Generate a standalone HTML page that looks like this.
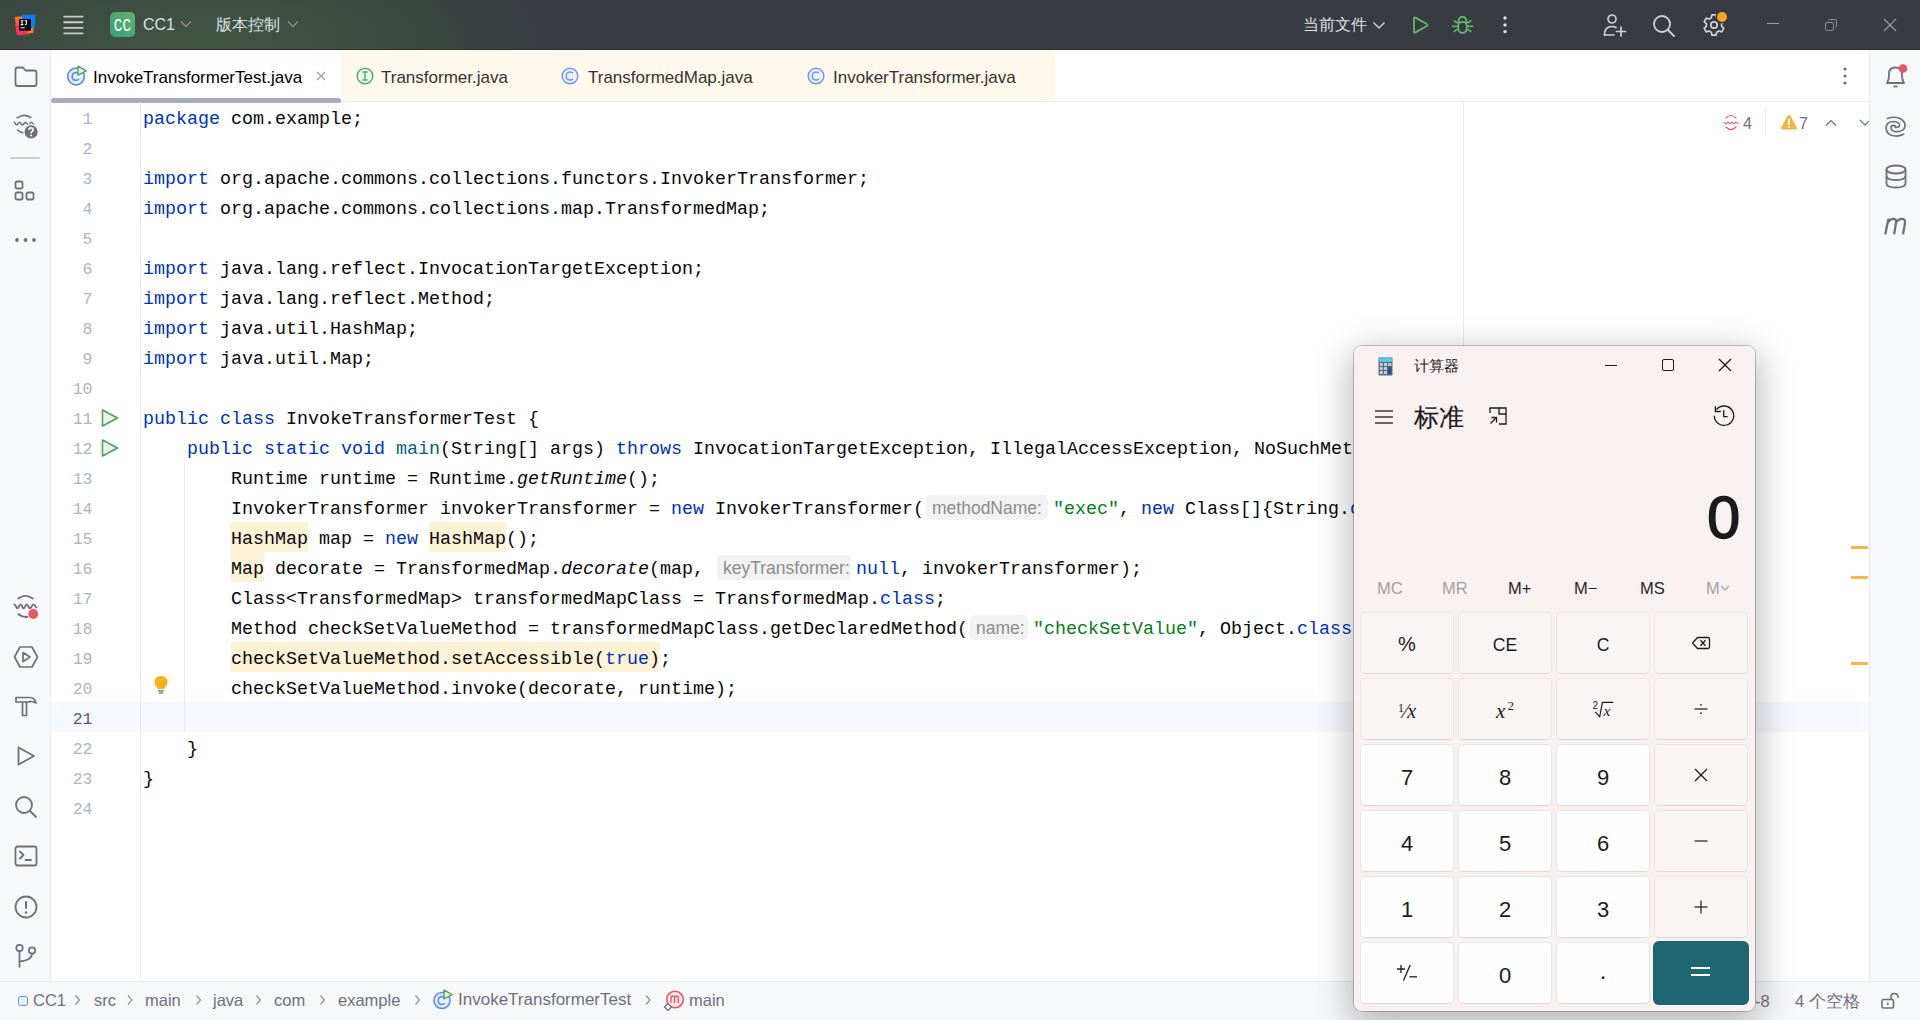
<!DOCTYPE html>
<html><head><meta charset="utf-8">
<style>
*{margin:0;padding:0;box-sizing:border-box}
html,body{width:1920px;height:1020px;overflow:hidden;background:#fff;font-family:"Liberation Sans",sans-serif}
.abs,svg.ic{position:absolute}
#title{left:0;top:0;width:1920px;height:50px;background:radial-gradient(ellipse 400px 130px at 200px 40px,#415544 0%,#3e4f42 30%,#3b4541 62%,#393c42 88%,#393b43 100%),#393b43;border-bottom:1px solid #2c2e33}
.tt{position:absolute;color:#dfe1e5;font-size:16px;line-height:20px;white-space:nowrap}
#lstrip{left:0;top:50px;width:51px;height:931px;background:#f7f8fa;border-right:1px solid #ebecf0}
#rstrip{left:1869px;top:50px;width:51px;height:931px;background:#f7f8fa;border-left:1px solid #ebecf0}
#tabs{left:51px;top:50px;width:1818px;height:52px;background:#fff;border-bottom:1px solid #ebecf0}
#status{left:0;top:981px;width:1920px;height:39px;background:#f7f8fa;border-top:1px solid #ebecf0}
.tab{position:absolute;top:68px;font-size:17px;line-height:20px;color:#000;white-space:nowrap}
.bc{position:absolute;top:990px;font-size:16.5px;line-height:20px;color:#6c707e;white-space:nowrap}
.ln{position:absolute;left:51.5px;width:41px;text-align:right;font-family:"Liberation Mono",monospace;font-size:16.5px;color:#aeb3c2;height:30px;line-height:33px}
.cl{position:absolute;left:143px;height:30px;line-height:33px;font-family:"Liberation Mono",monospace;font-size:18.33px;color:#080808;white-space:pre}
.k{color:#0033b3}
.s{color:#067d17}
.m{color:#00627a}
.i{font-style:italic}
.hl{}
.inlay{position:absolute;height:25px;line-height:26px;background:#f2f2f2;border-radius:5px;color:#8c8c8c;font-size:17.5px;padding:0 0 0 6px;white-space:nowrap}
</style></head>
<body>
<!-- ===== TITLE BAR ===== -->
<div id="title" class="abs"></div>
<!-- IJ logo -->
<svg class="ic" style="left:14px;top:14px" width="22" height="22" viewBox="0 0 22 22">
 <defs><linearGradient id="ijo" x1="0" y1="0" x2="0" y2="1"><stop offset="0" stop-color="#fc801d"/><stop offset="1" stop-color="#fe2857"/></linearGradient></defs>
 <path d="M0.8 3 L9 2.2 L9.5 14 L2.5 20 Z" fill="url(#ijo)"/>
 <path d="M8 2 Q8 0.8 9.2 0.8 L20 0.8 Q21.4 0.8 21.3 2.2 L21 13.5 L15 15 L8 9 Z" fill="#087cfa"/>
 <path d="M1.5 10 L11 15 L17 19 L14 20 L3.3 21.4 Z" fill="#fe315d"/>
 <path d="M15.5 15 L19.5 13.3 L19.3 18.8 L13.2 19.4 Z" fill="#fc801d"/>
 <rect x="5" y="5" width="12" height="11.6" fill="#000"/>
 <g stroke="#fff" stroke-width="1.1" fill="none"><path d="M6.6 6.8 H9.4 M8 6.8 V10.6 M6.6 10.6 H9.4"/><path d="M10.6 6.8 H13.2 M12.4 6.8 V9.6 Q12.4 10.7 10.9 10.7"/></g>
 <rect x="6.6" y="13.3" width="4.2" height="1" fill="#fff"/>
</svg>
<!-- hamburger -->
<svg class="ic" style="left:63px;top:14px" width="22" height="22" viewBox="0 0 22 22">
 <g stroke="#c9cbcf" stroke-width="1.9" stroke-linecap="round"><path d="M1.2 2.6 H19.6"/><path d="M1.2 8.2 H19.6"/><path d="M1.2 13.9 H19.6"/><path d="M1.2 19.4 H19.6"/></g>
</svg>
<!-- project badge -->
<div class="abs" style="left:110px;top:12px;width:25px;height:25px;border-radius:5px;background:linear-gradient(45deg,#3a9a7e,#62b46a)"></div>
<div class="tt" style="left:108px;top:16px;width:29px;text-align:center;font-family:'Liberation Mono',monospace;font-size:18px;color:#fff;transform:scaleX(0.8)">CC</div>
<div class="tt" style="left:143px;top:15px;font-size:16px">CC1</div>
<svg class="ic" style="left:180px;top:20px" width="12" height="8" viewBox="0 0 12 8"><path d="M1 1.5 L6 6.5 L11 1.5" fill="none" stroke="#8e9196" stroke-width="1.3"/></svg>
<div class="tt" style="left:216px;top:15px">版本控制</div>
<svg class="ic" style="left:287px;top:20px" width="12" height="8" viewBox="0 0 12 8"><path d="M1 1.5 L6 6.5 L11 1.5" fill="none" stroke="#8e9196" stroke-width="1.3"/></svg>

<div class="tt" style="left:1303px;top:15px">当前文件</div>
<svg class="ic" style="left:1372px;top:21px" width="14" height="9" viewBox="0 0 14 9"><path d="M1.5 1.5 L7 7 L12.5 1.5" fill="none" stroke="#c9cbcf" stroke-width="1.5"/></svg>
<!-- run -->
<svg class="ic" style="left:1410px;top:14px" width="22" height="22" viewBox="0 0 22 22"><path d="M4 4.5 Q4 2.8 5.5 3.6 L16.8 10 Q18 11 16.8 12 L5.5 18.4 Q4 19.2 4 17.5 Z" fill="none" stroke="#5fb865" stroke-width="1.8" stroke-linejoin="round"/></svg>
<!-- debug bug -->
<svg class="ic" style="left:1451px;top:14px" width="23" height="22" viewBox="0 0 23 22"><g fill="none" stroke="#5fb865" stroke-width="1.7" stroke-linecap="round">
 <path d="M7.6 7.6 Q7.6 2.9 11.5 2.9 Q15.4 2.9 15.4 7.6"/>
 <path d="M7.3 12 Q7.3 7.8 11.5 7.8 Q15.7 7.8 15.7 12 V14 Q15.7 18.9 11.5 18.9 Q7.3 18.9 7.3 14 Z"/>
 <path d="M3.2 6.8 Q5 8.5 7.2 8.7"/><path d="M19.8 6.8 Q18 8.5 15.8 8.7"/><path d="M1.5 12.3 H7"/><path d="M21.5 12.3 H16"/><path d="M3.2 17.3 Q5 15.6 7.4 15.4"/><path d="M19.8 17.3 Q18 15.6 15.6 15.4"/></g></svg>
<!-- kebab -->
<svg class="ic" style="left:1500px;top:14px" width="10" height="22" viewBox="0 0 10 22"><g fill="#dfe1e5"><circle cx="5" cy="4" r="1.7"/><circle cx="5" cy="11" r="1.7"/><circle cx="5" cy="17.6" r="1.7"/></g></svg>
<!-- person+ -->
<svg class="ic" style="left:1603px;top:13px" width="24" height="24" viewBox="0 0 24 24"><g fill="none" stroke="#cfd1d5" stroke-width="1.7" stroke-linecap="round">
 <circle cx="9" cy="6" r="4"/><path d="M1.5 22 Q1.5 13.5 9 13.5 Q11.5 13.5 13 14.5"/><path d="M1.5 22 H11"/><path d="M18 14 V23"/><path d="M13.5 18.5 H22.5"/></g></svg>
<!-- search -->
<svg class="ic" style="left:1652px;top:14px" width="24" height="24" viewBox="0 0 24 24"><g fill="none" stroke="#cfd1d5" stroke-width="1.8" stroke-linecap="round"><circle cx="10" cy="10" r="8"/><path d="M16 16 L22 22"/></g></svg>
<!-- gear -->
<svg class="ic" style="left:1702px;top:13px" width="24" height="24" viewBox="0 0 24 24"><g fill="none" stroke="#cfd1d5" stroke-width="1.7" stroke-linejoin="round">
 <path d="M10 1.8 H14 L14.7 4.8 L16.8 6 L19.8 5.1 L21.8 8.6 L19.6 10.8 V13.2 L21.8 15.4 L19.8 18.9 L16.8 18 L14.7 19.2 L14 22.2 H10 L9.3 19.2 L7.2 18 L4.2 18.9 L2.2 15.4 L4.4 13.2 V10.8 L2.2 8.6 L4.2 5.1 L7.2 6 L9.3 4.8 Z"/><circle cx="12" cy="12" r="3.2"/></g></svg>
<div class="abs" style="left:1717px;top:12px;width:10px;height:10px;border-radius:5px;background:#f5a623;box-shadow:0 0 0 1.5px #393b43"></div>
<!-- window controls -->
<div class="abs" style="left:1767px;top:23px;width:12px;height:1px;background:#9b9da2"></div>
<svg class="ic" style="left:1824px;top:18px" width="14" height="14" viewBox="0 0 14 14"><g fill="none" stroke="#8f9196" stroke-width="1"><rect x="1.5" y="4.5" width="8" height="8" rx="1.5"/><path d="M4.5 2.5 Q4.5 1.5 5.5 1.5 H11 Q12.5 1.5 12.5 3 V8.5 Q12.5 9.5 11.5 9.5"/></g></svg>
<svg class="ic" style="left:1883px;top:18px" width="14" height="14" viewBox="0 0 14 14"><g stroke="#9b9da2" stroke-width="1.1"><path d="M1 1 L13 13"/><path d="M13 1 L1 13"/></g></svg>

<!-- ===== STRIPS ===== -->
<div id="lstrip" class="abs"></div>
<div id="rstrip" class="abs"></div>
<div id="tabs" class="abs"></div>
<div id="status" class="abs"></div>

<!-- left strip icons -->
<svg class="ic" style="left:14px;top:66px" width="24" height="22" viewBox="0 0 24 22"><path d="M1.5 3.5 Q1.5 1.5 3.5 1.5 H9 L11.5 4.5 H20.5 Q22.5 4.5 22.5 6.5 V18 Q22.5 20 20.5 20 H3.5 Q1.5 20 1.5 18 Z" fill="none" stroke="#6c707e" stroke-width="1.8" stroke-linejoin="round"/></svg>
<svg class="ic" style="left:13px;top:113px" width="28" height="28" viewBox="0 0 28 28"><g fill="none" stroke="#6c707e" stroke-width="1.6" stroke-linecap="round">
 <path d="M4.2 4.8 Q11 0.1 17.7 4.5"/><path d="M1.2 9.3 C2.1 9.3 2.7 12 3.6 12 C4.6 12 5.5 9.3 6.5 9.3 C7.5 9.3 8.5 12 9.5 12 C10.5 12 11.5 9.3 12.5 9.3 C13.5 9.3 14.4 12 15.4 12 C16.4 12 17.3 9.3 18.3 9.3 C19.2 9.3 19.9 10.5 20.5 11.5"/><path d="M4.4 17 Q7 19.6 11 19.7"/></g>
 <circle cx="18.1" cy="18.9" r="7.2" fill="#6c707e" stroke="#f7f8fa" stroke-width="1.2"/><path d="M16 16.9 Q16 14.9 18.1 14.9 Q20.2 14.9 20.2 16.8 Q20.2 18 18.9 18.6 Q18.1 19 18.1 20.4" fill="none" stroke="#fff" stroke-width="1.6"/><circle cx="18.1" cy="22.5" r="1" fill="#fff"/></svg>
<div class="abs" style="left:10px;top:157px;width:30px;height:2px;background:#c9ccd6;border-radius:1px"></div>
<svg class="ic" style="left:14px;top:180px" width="22" height="22" viewBox="0 0 22 22"><g fill="none" stroke="#6c707e" stroke-width="1.8"><rect x="1.5" y="1.5" width="7" height="7" rx="1.6"/><rect x="1.5" y="12.5" width="7" height="7" rx="1.6"/><rect x="12.5" y="12.5" width="7" height="7" rx="1.6"/></g></svg>
<svg class="ic" style="left:14px;top:236px" width="24" height="8" viewBox="0 0 24 8"><g fill="#6c707e"><circle cx="3" cy="4" r="1.9"/><circle cx="11.5" cy="4" r="1.9"/><circle cx="20" cy="4" r="1.9"/></g></svg>

<svg class="ic" style="left:13px;top:593px" width="28" height="28" viewBox="0 0 28 28"><g fill="none" stroke="#6c707e" stroke-width="1.9" stroke-linecap="round">
 <path d="M5.2 5.5 Q12.45 0.2 19.7 5.5"/><path d="M1.4 11.4 C2.5 11.4 3.3 15.4 4.4 15.4 C5.5 15.4 6.4 11.4 7.5 11.4 C8.6 11.4 9.5 15.4 10.6 15.4 C11.7 15.4 12.7 11.4 13.8 11.4 C14.9 11.4 15.8 15.4 16.9 15.4 C18 15.4 19.3 11.4 20.5 11.4 C21.5 11.4 22.4 13.3 23.2 14.4"/><path d="M5.4 21.2 Q9.5 24.5 14.4 24"/></g>
 <circle cx="20.25" cy="21" r="4.9" fill="#e55765"/></svg>
<svg class="ic" style="left:13px;top:645px" width="26" height="24" viewBox="0 0 26 24"><g fill="none" stroke="#6c707e" stroke-width="1.7" stroke-linejoin="round"><path d="M7 2 H19 L24.5 12 L19 22 H7 L1.5 12 Z"/><path d="M10 7.5 L17 12 L10 16.5 Z"/></g></svg>
<svg class="ic" style="left:14px;top:694px" width="24" height="24" viewBox="0 0 24 24"><g fill="none" stroke="#6c707e" stroke-width="1.7" stroke-linejoin="round"><path d="M2 3.5 H15.5 Q21 3.5 22 9 Q18.5 7 15.5 7.5 V8 H2 Z"/><path d="M8.5 8 V21.5 H12.5 V8"/></g></svg>
<svg class="ic" style="left:15px;top:745px" width="22" height="22" viewBox="0 0 22 22"><path d="M3.5 2.5 L19 11 L3.5 19.5 Z" fill="none" stroke="#6c707e" stroke-width="1.8" stroke-linejoin="round"/></svg>
<svg class="ic" style="left:14px;top:795px" width="24" height="24" viewBox="0 0 24 24"><g fill="none" stroke="#6c707e" stroke-width="1.8" stroke-linecap="round"><circle cx="10" cy="10" r="8"/><path d="M16 16 L22 22"/></g></svg>
<svg class="ic" style="left:14px;top:845px" width="24" height="22" viewBox="0 0 24 22"><g fill="none" stroke="#6c707e" stroke-width="1.8" stroke-linejoin="round" stroke-linecap="round"><rect x="1.5" y="1.5" width="21" height="19" rx="2"/><path d="M6 6.5 L9.5 10 L6 13.5"/><path d="M11.5 15 H17"/></g></svg>
<svg class="ic" style="left:13px;top:894px" width="26" height="26" viewBox="0 0 26 26"><g fill="none" stroke="#6c707e" stroke-width="1.8"><circle cx="13" cy="13" r="10.5"/></g><rect x="12" y="7" width="2" height="8" rx="1" fill="#6c707e"/><circle cx="13" cy="18.5" r="1.3" fill="#6c707e"/></svg>
<svg class="ic" style="left:14px;top:943px" width="24" height="26" viewBox="0 0 24 26"><g fill="none" stroke="#6c707e" stroke-width="1.7" stroke-linecap="round"><circle cx="5.5" cy="5" r="3.2"/><circle cx="18" cy="7.5" r="3.2"/><path d="M5.5 8.2 V24"/><path d="M18 10.7 Q18 17 5.5 18.5"/></g></svg>

<!-- right strip icons -->
<svg class="ic" style="left:1883px;top:63px" width="26" height="28" viewBox="0 0 26 28"><g fill="none" stroke="#6c707e" stroke-width="1.8" stroke-linejoin="round"><path d="M4 20 Q6 17 6 13 V11 Q6 4.5 12.5 4.5 Q19 4.5 19 11 V13 Q19 17 21 20 Z"/><path d="M10.5 23.5 H14.5"/></g><circle cx="20" cy="5.5" r="4.3" fill="#e55765"/></svg>
<svg class="ic" style="left:1876px;top:106px" width="40" height="40" viewBox="0 0 40 40"><g fill="none" stroke="#6c707e" stroke-width="1.7" stroke-linecap="round"><path d="M11.4 12.5 Q18 10 24 12.5 Q29.5 15.5 29 20 Q28.5 25 21.5 25.7 Q15.5 26 15 22 Q15 19.3 17.5 19.3 Q19.5 19.5 19.5 21.3"/><path d="M27.6 28.2 Q23 30.3 19 30 Q10.5 29.5 10 22 Q10.5 15.5 17.5 15.5 Q23.5 15.8 23.5 19.5 Q23.5 21.5 19.5 21.3"/></g></svg>
<svg class="ic" style="left:1884px;top:164px" width="24" height="25" viewBox="0 0 24 25"><g fill="none" stroke="#6c707e" stroke-width="1.8"><ellipse cx="12" cy="5.5" rx="9.5" ry="4"/><path d="M2.5 5.5 V19.5 Q2.5 23.5 12 23.5 Q21.5 23.5 21.5 19.5 V5.5"/><path d="M2.5 12 Q2.5 16 12 16 Q21.5 16 21.5 12"/></g></svg>
<svg class="ic" style="left:1880px;top:214px" width="30" height="24" viewBox="0 0 30 24"><path d="M5.4 19.4 L8.3 5.6 M7.9 8.6 Q9.8 4.9 13.3 4.9 Q16.6 4.9 16 8.6 L14.3 19.4 M16.1 8.4 Q18.3 4.9 21.8 4.9 Q25.6 4.9 25 8.8 L23.2 19.4" fill="none" stroke="#6c707e" stroke-width="2.3" stroke-linecap="round"/></svg>

<!-- tabs -->
<div class="abs" style="left:341px;top:50px;width:714px;height:51px;background:#fff8ec"></div>
<svg class="ic" style="left:66px;top:65px" width="22" height="22" viewBox="0 0 22 22"><circle cx="10" cy="11.5" r="8.3" fill="#e7effd" stroke="#5e8ef7" stroke-width="1.7"/><path d="M13 8.8 Q11.8 7.6 10 7.6 Q6.2 7.6 6.2 11.5 Q6.2 15.4 10 15.4 Q11.8 15.4 13 14.2" fill="none" stroke="#5e8ef7" stroke-width="1.7"/><path d="M12 1.2 L20.2 5.8 L12 10.2 Z" fill="#e9f5e7" stroke="#4fa05b" stroke-width="1.4" stroke-linejoin="round"/></svg>
<div class="tab" style="left:93px">InvokeTransformerTest.java</div>
<svg class="ic" style="left:316px;top:71px" width="10" height="10" viewBox="0 0 10 10"><g stroke="#9fa2a8" stroke-width="1.2"><path d="M1 1 L9 9"/><path d="M9 1 L1 9"/></g></svg>
<div class="abs" style="left:51px;top:98px;width:290px;height:5px;background:#a8aebc;border-radius:3px"></div>
<svg class="ic" style="left:356px;top:67px" width="18" height="18" viewBox="0 0 18 18"><circle cx="9" cy="9" r="7.8" fill="#eef7ee" stroke="#59a869" stroke-width="1.5"/><path d="M6.5 5 H11.5 M9 5 V13 M6.5 13 H11.5" stroke="#59a869" stroke-width="1.4" fill="none"/></svg>
<div class="tab" style="left:381px;color:#333">Transformer.java</div>
<svg class="ic" style="left:561px;top:67px" width="18" height="18" viewBox="0 0 18 18"><circle cx="9" cy="9" r="7.8" fill="#eef3fe" stroke="#6d98f5" stroke-width="1.5"/><path d="M12 6.3 Q11 5 9.2 5 Q5.2 5 5.2 9 Q5.2 13 9.2 13 Q11 13 12 11.7" fill="none" stroke="#6d98f5" stroke-width="1.4"/></svg>
<div class="tab" style="left:588px;color:#333">TransformedMap.java</div>
<svg class="ic" style="left:807px;top:67px" width="18" height="18" viewBox="0 0 18 18"><circle cx="9" cy="9" r="7.8" fill="#eef3fe" stroke="#6d98f5" stroke-width="1.5"/><path d="M12 6.3 Q11 5 9.2 5 Q5.2 5 5.2 9 Q5.2 13 9.2 13 Q11 13 12 11.7" fill="none" stroke="#6d98f5" stroke-width="1.4"/></svg>
<div class="tab" style="left:833px;color:#333">InvokerTransformer.java</div>
<svg class="ic" style="left:1840px;top:66px" width="10" height="20" viewBox="0 0 10 20"><g fill="#6c707e"><circle cx="5" cy="3" r="1.6"/><circle cx="5" cy="10" r="1.6"/><circle cx="5" cy="17" r="1.6"/></g></svg>

<!-- editor decorations -->
<div class="abs" style="left:51px;top:702px;width:1818px;height:30px;background:#f5f8fe"></div>
<div class="abs" style="left:231px;top:522px;width:77px;height:30px;background:#fcf2d6"></div>
<div class="abs" style="left:429px;top:522px;width:77px;height:30px;background:#fcf2d6"></div>
<div class="abs" style="left:231px;top:552px;width:33px;height:30px;background:#fcf2d6"></div>
<div class="abs" style="left:231px;top:642px;width:429px;height:30px;background:#fcf2d6"></div>
<div class="abs" style="left:140px;top:102px;width:1px;height:878px;background:#ebecf0"></div>
<div class="abs" style="left:1463px;top:102px;width:1px;height:878px;background:#ebecf0"></div>
<div class="abs" style="left:184px;top:462px;width:1px;height:271px;background:#ebecf0"></div>
<svg class="ic" style="left:100px;top:408px" width="20" height="20" viewBox="0 0 20 20"><path d="M2.5 2 L17.5 10 L2.5 18 Z" fill="#eef7ee" stroke="#4da35a" stroke-width="1.6" stroke-linejoin="round"/></svg>
<svg class="ic" style="left:100px;top:438px" width="20" height="20" viewBox="0 0 20 20"><path d="M2.5 2 L17.5 10 L2.5 18 Z" fill="#eef7ee" stroke="#4da35a" stroke-width="1.6" stroke-linejoin="round"/></svg>
<svg class="ic" style="left:153px;top:675px" width="16" height="20" viewBox="0 0 16 20"><path d="M8 1 Q14.5 1 14.5 7.5 Q14.5 10.5 11.5 13 V14 H4.5 V13 Q1.5 10.5 1.5 7.5 Q1.5 1 8 1 Z" fill="#f5b21c"/><rect x="5" y="15.2" width="6" height="1.3" fill="#6c707e"/><rect x="5.8" y="17.3" width="4.4" height="1.3" fill="#6c707e"/></svg>
<!-- inspection widget -->
<svg class="ic" style="left:1722px;top:113px" width="18" height="19" viewBox="0 0 18 19"><g fill="none" stroke="#e05a66" stroke-width="1.1" stroke-linecap="round"><path d="M4 5 Q9 0 14 5"/><path d="M4 14 Q9 19 14 14"/><path d="M2 9.5 C2.8 9.5 3.2 11 4 11 C4.8 11 5.2 9 6 9 C6.8 9 7.2 11 8 11 C8.8 11 9.2 9 10 9 C10.8 9 11.2 11 12 11 C12.8 11 13.2 9 14 9 C14.8 9 15.2 10.5 16 10.5"/></g></svg>
<div class="abs" style="left:1743px;top:114px;font-size:16px;line-height:20px;color:#6c707e">4</div>
<div class="abs" style="left:1765px;top:108px;width:1px;height:28px;background:#ebecf0"></div>
<svg class="ic" style="left:1780px;top:114px" width="18" height="17" viewBox="0 0 18 17"><path d="M9 1 Q10 1 10.7 2.2 L16.8 13.5 Q17.5 15.5 15.5 15.5 H2.5 Q0.5 15.5 1.2 13.5 L7.3 2.2 Q8 1 9 1 Z" fill="#f2b445"/><rect x="8.1" y="4.8" width="1.8" height="6" fill="#fff"/><circle cx="9" cy="13" r="1" fill="#fff"/></svg>
<div class="abs" style="left:1799px;top:114px;font-size:16px;line-height:20px;color:#6c707e">7</div>
<svg class="ic" style="left:1824px;top:118px" width="14" height="9" viewBox="0 0 14 9"><path d="M2 7.5 L7 2.5 L12 7.5" fill="none" stroke="#6c707e" stroke-width="1.2"/></svg>
<svg class="ic" style="left:1858px;top:118px" width="11" height="9" viewBox="0 0 11 9"><path d="M2 2 L7 7 L12 2" fill="none" stroke="#6c707e" stroke-width="1.2"/></svg>
<!-- error stripe marks -->
<div class="abs" style="left:1851px;top:546px;width:17px;height:3px;background:#f2b84f"></div>
<div class="abs" style="left:1851px;top:576px;width:17px;height:3px;background:#f2b84f"></div>
<div class="abs" style="left:1851px;top:662px;width:17px;height:3px;background:#f2b84f"></div>

<!-- status bar -->
<div class="abs" style="left:18px;top:996px;width:10px;height:10px;border:1.6px solid #5e8ef7;border-radius:2.5px;background:#e9f0fe"></div>
<div class="bc" style="left:33px">CC1</div>
<div class="bc" style="left:94px">src</div>
<div class="bc" style="left:145px">main</div>
<div class="bc" style="left:213px">java</div>
<div class="bc" style="left:274px">com</div>
<div class="bc" style="left:338px">example</div>
<div class="bc" style="left:458px;font-size:17px">InvokeTransformerTest</div>
<div class="bc" style="left:689px">main</div>
<svg class="ic" style="left:0;top:980px" width="700" height="40" viewBox="0 0 700 40"><g fill="none" stroke="#8c909a" stroke-width="1.2"><path d="M75.5 15.5 L79.5 20 L75.5 24.5"/><path d="M128 15.5 L132 20 L128 24.5"/><path d="M196.5 15.5 L200.5 20 L196.5 24.5"/><path d="M256.5 15.5 L260.5 20 L256.5 24.5"/><path d="M320.5 15.5 L324.5 20 L320.5 24.5"/><path d="M415.5 15.5 L419.5 20 L415.5 24.5"/><path d="M646 15.5 L650 20 L646 24.5"/></g></svg>
<svg class="ic" style="left:432px;top:989px" width="22" height="21" viewBox="0 0 22 21"><circle cx="10" cy="11.5" r="8" fill="#e7effd" stroke="#5e8ef7" stroke-width="1.6"/><path d="M13 8.8 Q11.8 7.6 10 7.6 Q6.2 7.6 6.2 11.5 Q6.2 15.4 10 15.4 Q11.8 15.4 13 14.2" fill="none" stroke="#5e8ef7" stroke-width="1.6"/><path d="M12 1 L20 5.6 L12 10 Z" fill="#e9f5e7" stroke="#4fa05b" stroke-width="1.4" stroke-linejoin="round"/></svg>
<svg class="ic" style="left:663px;top:989px" width="22" height="22" viewBox="0 0 22 22"><circle cx="12" cy="10.5" r="8.3" fill="#fde9ea" stroke="#e55765" stroke-width="1.6"/><path d="M8 14 V8.5 Q8 7 9.8 7 Q11.5 7 11.5 8.5 V14 M11.5 8.5 Q11.5 7 13.3 7 Q15.2 7 15.2 8.5 V14" fill="none" stroke="#e55765" stroke-width="1.4"/><path d="M5 14.5 L8.5 18 L5 21.5 L1.5 18 Z" fill="#fff" stroke="#6c707e" stroke-width="1.3"/></svg>
<div class="bc" style="left:1755px;top:991px">-8</div>
<div class="bc" style="left:1795px;top:991px">4 个空格</div>
<svg class="ic" style="left:1880px;top:992px" width="20" height="18" viewBox="0 0 20 18"><g fill="none" stroke="#6c707e" stroke-width="1.6"><rect x="2" y="7.5" width="11.5" height="8.5" rx="1.5"/><path d="M11 7.5 V5 Q11 1.5 14.5 1.5 Q18 1.5 18 5 V6"/></g><rect x="7" y="10.5" width="1.6" height="2.6" fill="#6c707e"/></svg>

<!-- code -->
<div id="code">
<div class="ln" style="top:103px">1</div><div class="cl" style="top:103px"><span class="k">package</span> com.example;</div>
<div class="ln" style="top:133px">2</div>
<div class="ln" style="top:163px">3</div><div class="cl" style="top:163px"><span class="k">import</span> org.apache.commons.collections.functors.InvokerTransformer;</div>
<div class="ln" style="top:193px">4</div><div class="cl" style="top:193px"><span class="k">import</span> org.apache.commons.collections.map.TransformedMap;</div>
<div class="ln" style="top:223px">5</div>
<div class="ln" style="top:253px">6</div><div class="cl" style="top:253px"><span class="k">import</span> java.lang.reflect.InvocationTargetException;</div>
<div class="ln" style="top:283px">7</div><div class="cl" style="top:283px"><span class="k">import</span> java.lang.reflect.Method;</div>
<div class="ln" style="top:313px">8</div><div class="cl" style="top:313px"><span class="k">import</span> java.util.HashMap;</div>
<div class="ln" style="top:343px">9</div><div class="cl" style="top:343px"><span class="k">import</span> java.util.Map;</div>
<div class="ln" style="top:373px">10</div>
<div class="ln" style="top:403px">11</div><div class="cl" style="top:403px"><span class="k">public class</span> InvokeTransformerTest {</div>
<div class="ln" style="top:433px">12</div><div class="cl" style="top:433px">    <span class="k">public static void</span> <span class="m">main</span>(String[] args) <span class="k">throws</span> InvocationTargetException, IllegalAccessException, NoSuchMethodException {</div>
<div class="ln" style="top:463px">13</div><div class="cl" style="top:463px">        Runtime runtime = Runtime.<span class="i">getRuntime</span>();</div>
<div class="ln" style="top:493px">14</div><div class="cl" style="top:493px">        InvokerTransformer invokerTransformer = <span class="k">new</span> InvokerTransformer(</div>
<div class="inlay" style="left:926px;top:495px;width:122px">methodName:</div>
<div class="cl" style="top:493px;left:1053px"><span class="s">"exec"</span>, <span class="k">new</span> Class[]{String.<span class="k">class</span>}, <span class="k">new</span> Object[]{<span class="s">"calc"</span>});</div>
<div class="ln" style="top:523px">15</div><div class="cl" style="top:523px">        <span class="hl">HashMap</span> map = <span class="k">new</span> <span class="hl">HashMap</span>();</div>
<div class="ln" style="top:553px">16</div><div class="cl" style="top:553px">        <span class="hl">Map</span> decorate = TransformedMap.<span class="i">decorate</span>(map, </div>
<div class="inlay" style="left:717px;top:555px;width:134px">keyTransformer:</div>
<div class="cl" style="top:553px;left:856px"><span class="k">null</span>, invokerTransformer);</div>
<div class="ln" style="top:583px">17</div><div class="cl" style="top:583px">        Class&lt;TransformedMap&gt; transformedMapClass = TransformedMap.<span class="k">class</span>;</div>
<div class="ln" style="top:613px">18</div><div class="cl" style="top:613px">        Method checkSetValueMethod = transformedMapClass.getDeclaredMethod(</div>
<div class="inlay" style="left:970px;top:615px;width:58px">name:</div>
<div class="cl" style="top:613px;left:1033px"><span class="s">"checkSetValue"</span>, Object.<span class="k">class</span>, Object.<span class="k">class</span>);</div>
<div class="ln" style="top:643px">19</div><div class="cl" style="top:643px">        <span class="hl">checkSetValueMethod.setAccessible(<span class="k">true</span>)</span>;</div>
<div class="ln" style="top:673px">20</div><div class="cl" style="top:673px">        checkSetValueMethod.invoke(decorate, runtime);</div>
<div class="ln" style="top:703px;color:#5a5d66">21</div>
<div class="ln" style="top:733px">22</div><div class="cl" style="top:733px">    }</div>
<div class="ln" style="top:763px">23</div><div class="cl" style="top:763px">}</div>
<div class="ln" style="top:793px">24</div>
</div>


<!-- ===== CALCULATOR ===== -->
<div class="abs" style="left:1354px;top:346px;width:401px;height:665px;border-radius:8px;box-shadow:0 0 0 1px rgba(0,0,0,0.22),0 10px 36px 4px rgba(0,0,0,0.28);background:#f9f0ef"></div>
<div class="abs" style="left:1354px;top:346px;width:401px;height:665px;border-radius:8px;background:#f9f1f0;overflow:hidden">
<style>
.cb{position:absolute;width:94px;height:62px;border-radius:5px;border:1px solid #ebe5e4;border-bottom-color:#dcd6d5;background:#faf5f5;display:flex;align-items:center;justify-content:center;line-height:1;color:#1b1b1b;font-size:17.5px}
.cn{background:#fefefe;font-size:22px}
.mm{position:absolute;top:578px;font-size:16.5px;line-height:20px;color:#262626}
.mg{color:#a3a0a0}
</style>
</div>
<svg class="ic" style="left:1378px;top:357px" width="16" height="19" viewBox="0 0 16 19">
 <rect x="0.5" y="0.5" width="14" height="18" rx="1.2" fill="#5a6b7c"/>
 <rect x="1.2" y="1.2" width="12.6" height="3.6" fill="#4fd3f5"/>
 <g fill="#c5ced6"><rect x="1.8" y="6" width="3" height="3"/><rect x="6" y="6" width="3" height="3"/><rect x="10.2" y="6" width="3" height="3"/><rect x="1.8" y="10" width="3" height="3"/><rect x="6" y="10" width="3" height="3"/><rect x="1.8" y="14" width="3" height="3"/><rect x="6" y="14" width="3" height="3"/></g>
 <rect x="10.2" y="10" width="3" height="7" fill="#1d4f9a"/>
</svg>
<div class="abs" style="left:1414px;top:356px;font-size:15px;line-height:20px;color:#1b1b1b">计算器</div>
<div class="abs" style="left:1605px;top:365px;width:12px;height:1.3px;background:#1b1b1b"></div>
<div class="abs" style="left:1662px;top:359px;width:12px;height:12px;border:1.3px solid #1b1b1b;border-radius:2px"></div>
<svg class="ic" style="left:1718px;top:358px" width="14" height="14" viewBox="0 0 14 14"><g stroke="#1b1b1b" stroke-width="1.3"><path d="M1 1 L13 13"/><path d="M13 1 L1 13"/></g></svg>
<svg class="ic" style="left:1374px;top:408px" width="20" height="18" viewBox="0 0 20 18"><g stroke="#1b1b1b" stroke-width="1.3"><path d="M1 3 H19"/><path d="M1 9 H19"/><path d="M1 15 H19"/></g></svg>
<div class="abs" style="left:1414px;top:402px;font-size:25px;line-height:30px;color:#1b1b1b;-webkit-text-stroke:0.2px #1b1b1b">标准</div>
<svg class="ic" style="left:1488px;top:406px" width="20" height="20" viewBox="0 0 20 20"><g fill="none" stroke="#1b1b1b" stroke-width="1.3"><path d="M2 7 V2 H11 V8 H18 V18 H11"/><path d="M11 2 H18 V8"/><path d="M2.5 17.5 L8.5 11.5"/><path d="M3.5 11.5 H8.5 V16.5"/></g></svg>
<svg class="ic" style="left:1712px;top:404px" width="24" height="24" viewBox="0 0 24 24"><g fill="none" stroke="#1b1b1b" stroke-width="1.3"><path d="M4.57 5.47 A9.7 9.7 0 1 1 2.3 11.7"/><path d="M3.4 2.3 V7.5 H8.8"/><path d="M11.7 6 V12.6 H15.6"/></g></svg>
<div class="abs" style="left:1600px;top:483px;width:140px;text-align:right;font-size:59px;line-height:70px;color:#1b1b1b;-webkit-text-stroke:1.6px #1b1b1b">0</div>
<div class="mm mg" style="left:1377px">MC</div>
<div class="mm mg" style="left:1442px">MR</div>
<div class="mm" style="left:1508px">M+</div>
<div class="mm" style="left:1574px">M−</div>
<div class="mm" style="left:1640px">MS</div>
<div class="mm mg" style="left:1706px">M</div><svg class="ic" style="left:1720px;top:584px" width="10" height="8" viewBox="0 0 10 8"><path d="M1 2 L5 6 L9 2" fill="none" stroke="#a3a0a0" stroke-width="1.2"/></svg>
<div class="cb" style="left:1360px;top:612px"><span style="font-size:20px;padding-top:2px">%</span></div>
<div class="cb" style="left:1458px;top:612px"><span style="padding-top:5px">CE</span></div>
<div class="cb" style="left:1556px;top:612px"><span style="padding-top:5px">C</span></div>
<div class="cb" style="left:1654px;top:612px"><svg width="20" height="16" viewBox="0 0 20 16"><g fill="none" stroke="#1b1b1b" stroke-width="1.3" stroke-linejoin="round"><path d="M6.5 2.5 H17 Q18.5 2.5 18.5 4 V12 Q18.5 13.5 17 13.5 H6.5 L1.5 8 Z"/><path d="M9.5 5.3 L14.5 10.7 M14.5 5.3 L9.5 10.7"/></g></svg></div>
<div class="cb" style="left:1360px;top:678px"><span style="font-family:'Liberation Serif',serif;font-size:20px;padding-top:3px"><sup style="font-size:12px;vertical-align:6px">1</sup>⁄<i>x</i></span></div>
<div class="cb" style="left:1458px;top:678px"><span style="font-family:'Liberation Serif',serif;font-size:21px;padding-top:3px"><i>x</i><sup style="font-size:13px;vertical-align:8px;margin-left:2px">2</sup></span></div>
<div class="cb" style="left:1556px;top:678px"><svg width="26" height="22" viewBox="0 0 26 22"><text x="2.4" y="10.8" font-family="Liberation Sans" font-size="10" fill="#1b1b1b">2</text><path d="M5.3 13.8 L9.7 18.8 L12.4 4.4 H23.2" fill="none" stroke="#1b1b1b" stroke-width="1.2"/><text x="13.6" y="18.3" font-family="Liberation Serif" font-style="italic" font-size="15.5" fill="#1b1b1b">x</text></svg></div>
<div class="cb" style="left:1654px;top:678px"><svg width="16" height="16" viewBox="0 0 16 16"><path d="M1.5 8 H14.5" stroke="#1b1b1b" stroke-width="1.2"/><circle cx="8" cy="3.8" r="0.9" fill="#1b1b1b"/><circle cx="8" cy="12.2" r="0.9" fill="#1b1b1b"/></svg></div>
<div class="cb cn" style="left:1360px;top:744px"><span style="padding-top:5px">7</span></div>
<div class="cb cn" style="left:1458px;top:744px"><span style="padding-top:5px">8</span></div>
<div class="cb cn" style="left:1556px;top:744px"><span style="padding-top:5px">9</span></div>
<div class="cb" style="left:1654px;top:744px"><svg width="16" height="16" viewBox="0 0 16 16"><g stroke="#1b1b1b" stroke-width="1.2"><path d="M2 2 L14 14"/><path d="M14 2 L2 14"/></g></svg></div>
<div class="cb cn" style="left:1360px;top:810px"><span style="padding-top:5px">4</span></div>
<div class="cb cn" style="left:1458px;top:810px"><span style="padding-top:5px">5</span></div>
<div class="cb cn" style="left:1556px;top:810px"><span style="padding-top:5px">6</span></div>
<div class="cb" style="left:1654px;top:810px"><svg width="16" height="16" viewBox="0 0 16 16"><path d="M1.5 8 H14.5" stroke="#1b1b1b" stroke-width="1.2"/></svg></div>
<div class="cb cn" style="left:1360px;top:876px"><span style="padding-top:5px">1</span></div>
<div class="cb cn" style="left:1458px;top:876px"><span style="padding-top:5px">2</span></div>
<div class="cb cn" style="left:1556px;top:876px"><span style="padding-top:5px">3</span></div>
<div class="cb" style="left:1654px;top:876px"><svg width="16" height="16" viewBox="0 0 16 16"><g stroke="#1b1b1b" stroke-width="1.2"><path d="M1.5 8 H14.5"/><path d="M8 1.5 V14.5"/></g></svg></div>
<div class="cb cn" style="left:1360px;top:942px"><svg width="24" height="20" viewBox="0 0 24 20"><g stroke="#1b1b1b" stroke-width="1.3" fill="none"><path d="M2 6 H10 M6 2 V10"/><path d="M15.2 2 L8.5 17.6"/><path d="M14.4 13.8 H22"/></g></svg></div>
<div class="cb cn" style="left:1458px;top:942px"><span style="padding-top:5px">0</span></div>
<div class="cb cn" style="left:1556px;top:942px"><span style='font-size:24px;padding-bottom:4px'>.</span></div>
<div class="abs" style="left:1653px;top:941px;width:96px;height:64px;border-radius:6px;background:#1f6673"></div>
<div class="abs" style="left:1691px;top:967px;width:19px;height:2px;background:#fff"></div><div class="abs" style="left:1691px;top:974px;width:19px;height:2px;background:#fff"></div>
</body></html>
